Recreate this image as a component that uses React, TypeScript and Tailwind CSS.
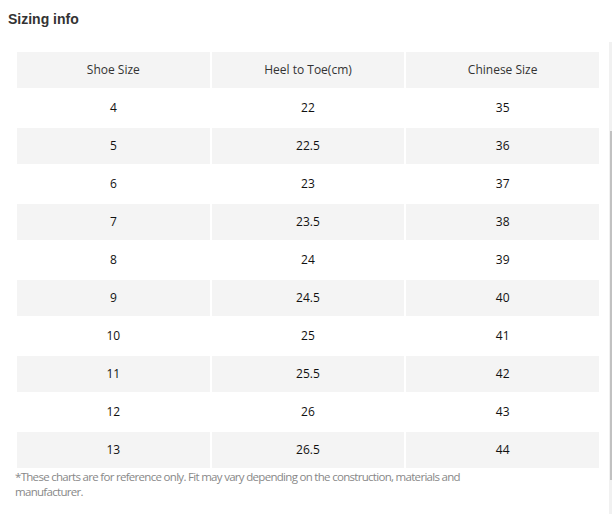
import React from "react";

const rows: [string, string, string][] = [
  ["4", "22", "35"],
  ["5", "22.5", "36"],
  ["6", "23", "37"],
  ["7", "23.5", "38"],
  ["8", "24", "39"],
  ["9", "24.5", "40"],
  ["10", "25", "41"],
  ["11", "25.5", "42"],
  ["12", "26", "43"],
  ["13", "26.5", "44"],
];

export default function App() {
  return (
    <div className="relative w-[612px] h-[514px] bg-white overflow-hidden">
      <div className="pl-[8px] pt-[9px]">
        <h2
          className="text-[14px] leading-[20px] font-bold text-[#333]"
          style={{ fontFamily: '"Liberation Sans", Arial, sans-serif' }}
        >
          Sizing info
        </h2>
      </div>
      <div
        className="pl-[15px] pt-[21px] w-[601px]"
        style={{ fontFamily: '"Open Sans", sans-serif' }}
      >
        <table className="w-full border-separate border-spacing-[2px] text-[12px] text-center">
          <thead>
            <tr className="bg-[#f4f4f4]">
              <th className="h-[36px] font-normal text-[#333] w-1/3">Shoe Size</th>
              <th className="h-[36px] font-normal text-[#333] w-1/3">Heel to Toe(cm)</th>
              <th className="h-[36px] font-normal text-[#333] w-1/3">Chinese Size</th>
            </tr>
          </thead>
          <tbody>
            {rows.map((r, i) => (
              <tr key={i} className={i % 2 === 1 ? "bg-[#f4f4f4]" : "bg-white"}>
                {r.map((c, j) => (
                  <td key={j} className="h-[36px] text-[#111]">
                    {c}
                  </td>
                ))}
              </tr>
            ))}
          </tbody>
        </table>
        <p className="text-[11.5px] leading-[15px] tracking-[-0.7px] text-[#888] max-w-[480px] -mt-[1px]">
          *These charts are for reference only. Fit may vary depending on the construction, materials and manufacturer.
        </p>
      </div>
      <div className="absolute left-[609px] top-[42px] w-[3px] h-[472px] bg-[#f1f1f1]">
        <div className="ml-[1px] mt-[89px] w-[2px] h-[349px] bg-[#c1c1c1]" />
      </div>
    </div>
  );
}
